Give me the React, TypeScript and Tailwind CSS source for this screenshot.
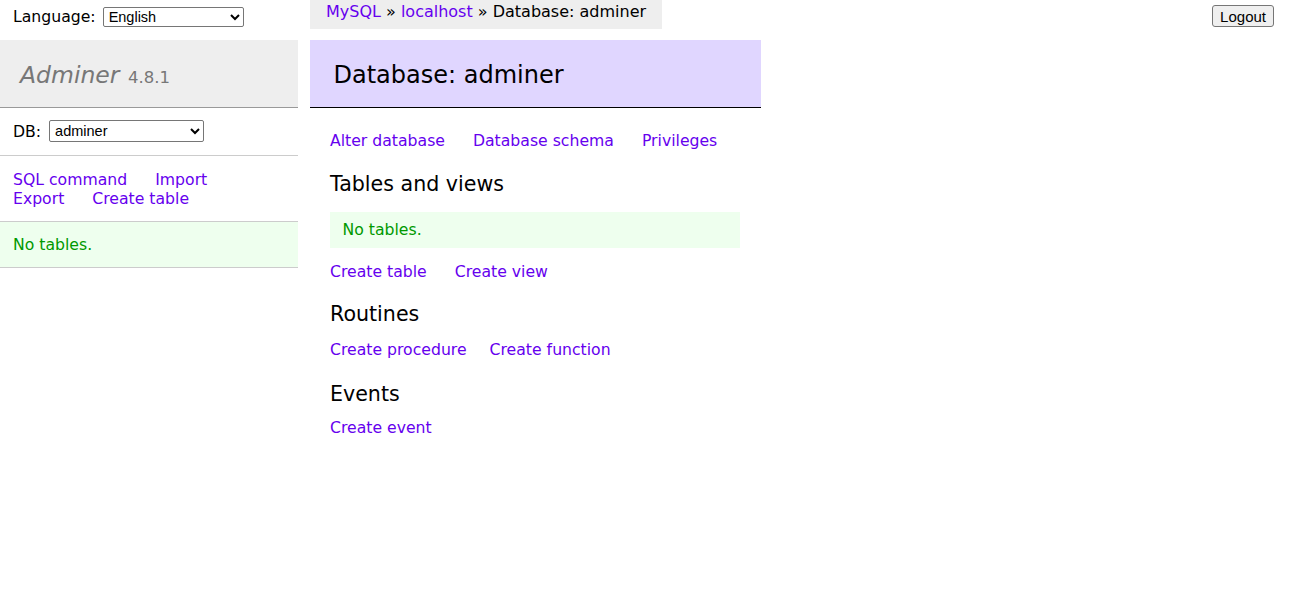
import React from "react";

const link = "text-[#6600ee] no-underline";

function Links({
  items,
  className = "",
  gap = "mr-[23px]",
}: {
  items: string[];
  className?: string;
  gap?: string;
}) {
  return (
    <p className={className}>
      {items.map((t, i) => (
        <React.Fragment key={t}>
          <a href="#" className={`${link} whitespace-nowrap ${i < items.length - 1 ? gap : ""}`}>
            {t}
          </a>
          {i < items.length - 1 ? " " : null}
        </React.Fragment>
      ))}
    </p>
  );
}

export default function App() {
  return (
    <div className="min-h-[592px] w-full bg-white text-black font-['DejaVu_Sans',Verdana,sans-serif] text-[15.68px] leading-[1.25]">
      {/* top strip */}
      <div className="flex h-[40px] items-start">
        <div className="w-[310px] pl-[13px] pt-[7px] flex items-center gap-[7px]">
          <span>Language:</span>
          <select
            defaultValue="en"
            className="w-[141px] h-[20px] border border-[#767676] rounded-[2px] bg-white text-[14.5px] font-['Liberation_Sans',Arial,sans-serif] pl-[1px]"
          >
            <option value="en">English</option>
          </select>
        </div>
        <div className="h-[29px] leading-[23px] bg-[#eee] px-[16px] whitespace-nowrap text-[16px]">
          <a href="#" className={link}>MySQL</a> »{" "}
          <a href="#" className={link}>localhost</a> » Database: adminer
        </div>
        <div className="flex-1" />
        <button className="mt-[5px] mr-[18px] h-[22px] px-[7px] border border-[#767676] rounded-[3px] bg-[#efefef] text-[15px] leading-none font-['Liberation_Sans',Arial,sans-serif]">
          Logout
        </button>
      </div>

      <div className="flex gap-[12px] items-start">
        {/* sidebar */}
        <div className="w-[298px] shrink-0">
          <h1 className="bg-[#eee] border-b border-[#999] text-[#777] text-[23.5px] leading-[1.25] pt-[21px] pb-[16.6px] pl-[20px] font-normal">
            <a href="#" className="italic text-[#777]">Adminer</a>{" "}
            <span className="text-[16.5px] ml-[1px]">4.8.1</span>
          </h1>
          <div className="border-b border-[#ccc] px-[13px] py-[12.5px] flex items-center gap-[8px]">
            <span>DB:</span>
            <select
              defaultValue="adminer"
              className="w-[155px] h-[22px] border border-[#767676] rounded-[2px] bg-white text-[14.5px] font-['Liberation_Sans',Arial,sans-serif] pl-[1px]"
            >
              <option value="adminer">adminer</option>
            </select>
          </div>
          <Links
            items={["SQL command", "Import", "Export", "Create table"]}
            className="border-b border-[#ccc] px-[13px] pt-[14.5px] pb-[13px] leading-[19px]"
          />
          <p className="border-b border-[#ccc] bg-[#efe] text-[#009900] px-[13px] py-[12.5px]">
            No tables.
          </p>
        </div>

        {/* content */}
        <div className="w-[451px] shrink-0">
          <h2 className="bg-[#e0d6ff] border-b border-black text-[24px] leading-[1.25] pt-[19.5px] pb-[17.5px] px-[23.5px] font-normal">
            Database: adminer
          </h2>
          <div className="pl-[20px] pr-[21px] pt-[23px]">
            <Links items={["Alter database", "Database schema", "Privileges"]} />
            <h3 className="text-[20.6px] leading-[1.25] mt-[21px] font-normal">Tables and views</h3>
            <p className="mt-[15px] bg-[#efe] text-[#009900] px-[12.5px] py-[7.8px]">No tables.</p>
            <Links items={["Create table", "Create view"]} className="mt-[14px]" />
            <h3 className="text-[20.6px] leading-[1.25] mt-[21px] font-normal">Routines</h3>
            <Links
              items={["Create procedure", "Create function"]}
              className="mt-[12px]"
              gap="mr-[18px]"
            />
            <h3 className="text-[20.6px] leading-[1.25] mt-[22px] font-normal">Events</h3>
            <Links items={["Create event"]} className="mt-[11px]" />
          </div>
        </div>
      </div>
    </div>
  );
}
